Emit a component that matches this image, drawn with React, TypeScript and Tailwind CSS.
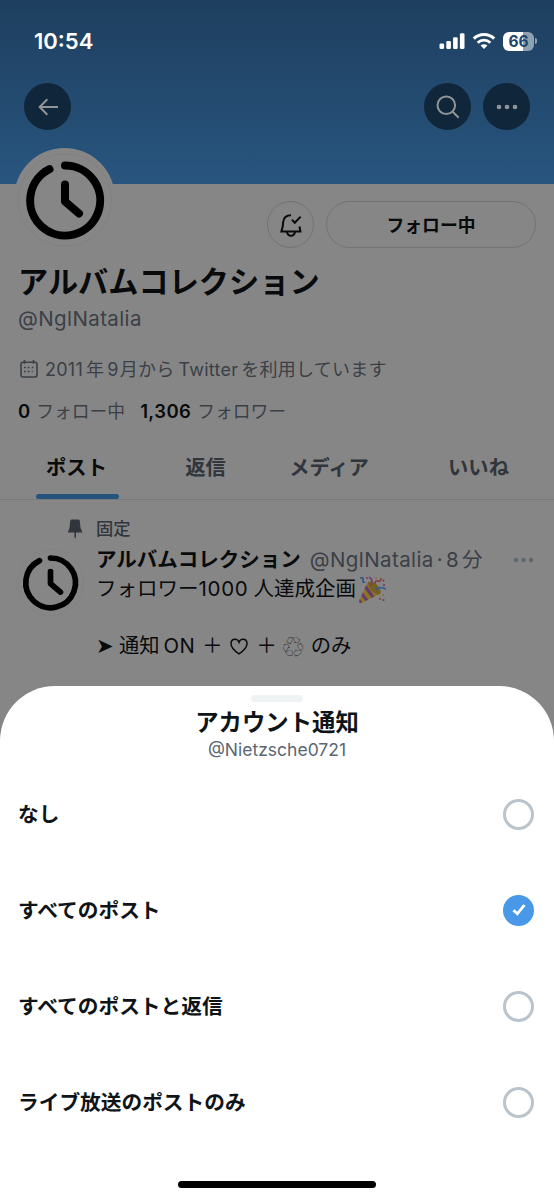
import clsx from "clsx";

const tabs = [
  { label: "ポスト", width: "w-[153px]", active: true },
  { label: "返信", width: "w-[105px]", active: false },
  { label: "メディア", width: "w-[142px]", active: false },
  { label: "いいね", width: "w-[157px]", active: false },
];

const options = [
  { label: "なし", selected: false },
  { label: "すべてのポスト", selected: true },
  { label: "すべてのポストと返信", selected: false },
  { label: "ライブ放送のポストのみ", selected: false },
];

function ClockLogo({ className }: { className: string }) {
  return (
    <svg viewBox="0 0 100 100" fill="none" className={className}>
      <circle cx="50" cy="50" r="46.5" stroke="#7f7f7f" strokeWidth="0.8" />
      <g stroke="#000" strokeWidth="8" strokeLinecap="round" strokeLinejoin="round">
        <path d="M50 15.5 A35 35 0 1 1 34.5 19.2" />
        <path d="M50 34.5 V51.5 L64 63.5" />
      </g>
    </svg>
  );
}

function Dots({ className }: { className: string }) {
  return (
    <svg viewBox="0 0 22 6" fill="currentColor" className={className}>
      <circle cx="3" cy="3" r="2.3" />
      <circle cx="11" cy="3" r="2.3" />
      <circle cx="19" cy="3" r="2.3" />
    </svg>
  );
}

function StatusBar() {
  return (
    <div className="flex h-[83px] items-start justify-between pt-[26px] pr-[17px] pl-[34px] text-white">
      <span className="text-[22px] leading-[30px] font-semibold">10:54</span>
      <div className="flex h-[30px] items-center">
        <svg viewBox="0 0 26 16" fill="currentColor" className="mr-[7px] h-4 w-[26px]">
          <rect x="0.5" y="10.5" width="4.6" height="5.5" rx="1.3" />
          <rect x="7.3" y="8" width="4.6" height="8" rx="1.3" />
          <rect x="14.1" y="4.2" width="4.6" height="11.8" rx="1.3" />
          <rect x="20.9" y="0.2" width="4.6" height="15.8" rx="1.3" />
        </svg>
        <svg viewBox="0 0 24 18" fill="none" stroke="currentColor" className="mr-[7px] h-[18px] w-6">
          <path d="M1.8 6.7 A14.6 14.6 0 0 1 22.2 6.7" strokeWidth="3.1" />
          <path d="M5.7 10.7 A9 9 0 0 1 18.3 10.7" strokeWidth="2.9" />
          <path d="M12 17 L8.6 13.6 A4.9 4.9 0 0 1 15.4 13.6 Z" fill="currentColor" stroke="none" />
        </svg>
        <div className="flex h-[19px] w-[31px] items-center justify-center rounded-[6px] bg-linear-to-r from-white from-66% to-[#8fa0b0] to-66% text-[15.5px] font-bold text-[#20456a]">
          <span className="pt-px font-['Inter'] leading-[18px]">66</span>
        </div>
        <div className="ml-[1px] h-[6px] w-[2px] rounded-r-full bg-[#8fa0b0]" />
      </div>
    </div>
  );
}

function PartyPopper() {
  return (
    <svg viewBox="0 0 28 28" fill="none" className="ml-[2px] h-7 w-7">
      <path d="M10 6 L22 18 L3 27 Q0.5 27.5 1 25 Z" fill="#8d7422" />
      <path d="M10 6 Q15 4 20 10 Q24 15 22 18 Q17 19 13 14 Q9 9 10 6 Z" fill="#756022" />
      <path d="M8.3 9 L16.5 20.6 L13.7 22 L6.6 12.5 Z M4.7 16.6 L10.2 23.7 L7.5 25 L3.4 19.7 Z" fill="#633c70" />
      <path d="M1.8 23 L4.4 26.3 L2.5 27.2 Q0.8 27 1.2 25 Z" fill="#633c70" />
      <path d="M2 2 Q6 1 5 4 Q4 7 7 6" stroke="#2d5687" strokeWidth="1.6" />
      <path d="M18 14 Q20 10 28 13" stroke="#365f91" strokeWidth="1.8" />
      <path d="M11 1 Q16 4 13 9" stroke="#764175" strokeWidth="1.6" />
      <path d="M17 8 Q17 4 20 5 Q23 6 23 2" stroke="#8b3742" strokeWidth="1.5" />
      <g fill="#8b3742">
        <circle cx="9" cy="2" r="1" />
        <circle cx="25.5" cy="4.5" r="1.1" />
        <circle cx="22" cy="23" r="1" />
      </g>
      <g fill="#633c70">
        <circle cx="26" cy="9" r="1.1" />
        <circle cx="25.5" cy="24" r="1" />
      </g>
      <circle cx="25" cy="19" r="1" fill="#8d7422" />
      <circle cx="18" cy="2" r="1" fill="#8d7422" />
    </svg>
  );
}

function Header() {
  return (
    <header className="h-[184px] bg-linear-to-b from-[#1e3f5f] to-[#28557f]">
      <StatusBar />
      <div className="flex items-center pr-6 pl-6 text-[#929496]">
        <button className="flex h-[47px] w-[47px] items-center justify-center rounded-full bg-[#10263a]">
          <svg viewBox="0 0 20 18" fill="none" stroke="currentColor" strokeWidth="2" className="h-[18px] w-5">
            <path d="M20 9 H2 M9.3 1.3 L1.7 9 L9.3 16.7" />
          </svg>
        </button>
        <button className="mr-3 ml-auto flex h-[47px] w-[47px] items-center justify-center rounded-full bg-[#10263a]">
          <svg viewBox="0 0 24 24" fill="none" stroke="currentColor" strokeWidth="2" className="h-6 w-6">
            <circle cx="10.3" cy="10.3" r="8.8" />
            <path d="M16.5 16.5 L22.7 22.7" />
          </svg>
        </button>
        <button className="flex h-[47px] w-[47px] items-center justify-center rounded-full bg-[#10263a]">
          <Dots className="h-[6px] w-[22px]" />
        </button>
      </div>
    </header>
  );
}

function Profile() {
  return (
    <section className="relative pt-[17px]">
      <div className="absolute -top-9 left-[14px] h-[101px] w-[101px] rounded-full bg-[#868686]">
        <ClockLogo className="mt-[2px] ml-[1px] h-[100px] w-[100px]" />
      </div>
      <div className="flex justify-end gap-3 pr-[18px]">
        <button className="flex h-[47px] w-[47px] items-center justify-center rounded-full border border-[#6f7376]">
          <svg viewBox="0 0 22 24" fill="none" stroke="#080a0c" strokeWidth="2" className="h-6 w-[22px]">
            <path d="M11 2.2 C6.5 2.2 3.6 4.8 3.2 8.8 L2.8 13 L1.4 18.4 H20.4 L19.5 13.5" />
            <path d="M7 18.8 C7.4 21.4 8.9 22.7 11 22.7 C13.1 22.7 14.6 21.4 15 18.8" />
            <path d="M12 6.8 L14.8 9.7 L20.6 3.6" />
          </svg>
        </button>
        <button className="h-[47px] w-[210px] rounded-full border border-[#6f7376] pt-[3px] text-[17.8px] font-bold text-[#080a0c]">
          フォロー中
        </button>
      </div>
      <div className="pl-[18px] whitespace-nowrap">
        <h1 className="mt-[14px] text-[30.2px] leading-10 font-bold text-[#080a0c]">アルバムコレクション</h1>
        <p className="text-[20.5px] leading-[34px] tracking-[0.4px] text-[#3a4046]">@NglNatalia</p>
        <div className="mt-4 flex h-[34px] items-center text-[18px] tracking-[0.25px] text-[#3a4046]">
          <svg viewBox="0 0 18 18" fill="none" stroke="currentColor" className="mr-[7px] ml-[2px] h-[18px] w-[18px]">
            <rect x="1" y="2.2" width="16" height="14.8" rx="2" strokeWidth="1.6" />
            <path d="M4.5 0 V3.8 M13.5 0 V3.8" strokeWidth="1.6" />
            <path d="M7.7 7.5 H9.5 M11.7 7.5 H13.5 M4 11.5 H5.8 M7.7 11.5 H9.5 M4 7.5 H5.8 M11.7 11.5 H12.8" strokeWidth="1.7" />
          </svg>
          <span className="flex">
            2011<span className="mr-[3px] ml-[3px]">年</span>9<span className="mr-1 ml-px">月から</span>
            Twitter<span className="ml-[3px]">を利用しています</span>
          </span>
        </div>
        <div className="mt-[9px] flex h-[34px] items-center text-[17.8px] text-[#3a4046]">
          <b className="mr-[6px] text-[18.5px] font-semibold text-[#080a0c]">0</b>フォロー中
          <b className="mr-[6px] ml-[15px] text-[18.5px] font-semibold tracking-[0.4px] text-[#080a0c]">1,306</b>フォロワー
        </div>
      </div>
      <nav className="mt-6 flex h-[47px] border-b border-[#777a7c]">
        {tabs.map((tab) => (
          <div key={tab.label} className={clsx("flex shrink-0 flex-col items-center justify-between", tab.width)}>
            <span
              className={clsx("text-[20.3px] leading-[30px] font-bold", tab.active ? "text-[#080a0c]" : "text-[#30363c]")}
            >
              {tab.label}
            </span>
            {tab.active && <span className="ml-[2px] h-[5px] w-[83px] rounded-full bg-[#27547f]" />}
          </div>
        ))}
      </nav>
    </section>
  );
}

function PinnedPost() {
  return (
    <article className="pt-[15px] whitespace-nowrap text-[#080a0c]">
      <div className="flex h-7 items-center pl-[67px] text-[17.3px] font-medium text-[#30363c]">
        <svg viewBox="0 0 16 20" fill="currentColor" className="mr-[13px] h-5 w-4">
          <path d="M4.5 0.5 H11.5 Q12.7 0.5 12.8 2 L13.5 9 L15.5 13.5 H9 V17.5 L8.2 20 L7.4 17.5 V13.5 H0.8 L2.5 9 L3.2 2 Q3.3 0.5 4.5 0.5 Z" />
        </svg>
        固定
      </div>
      <div className="flex">
        <ClockLogo className="mt-[4px] mr-[10px] ml-[15px] h-[71px] w-[71px] shrink-0" />
        <div className="flex-1 pt-[2px]">
          <div className="flex h-[30px] items-center pr-5">
            <span className="text-[20.5px] font-bold">アルバムコレクション</span>
            <span className="ml-[9px] flex text-[20.5px] tracking-[0.4px] text-[#3a4046]">
              @NglNatalia<span className="mx-[3px]">·</span>8<span className="ml-[3px]">分</span>
            </span>
            <Dots className="ml-auto h-[6px] w-[21px] text-[#5c6870]" />
          </div>
          <p className="flex h-[29px] items-center text-[20.5px]">
            フォロワー<span className="tracking-[0.7px]">1000</span>
            <span className="ml-[5px]">人達成企画</span>
            <PartyPopper />
          </p>
          <p className="mt-[27px] flex h-[30px] items-center text-[20.3px]">
            <span className="w-[23px] text-[21px]">➤</span>
            通知<span className="mr-[7px] ml-[4px] tracking-[0.4px]">ON</span>＋
            <svg viewBox="0 0 18 17" fill="none" stroke="currentColor" strokeWidth="1.5" className="mx-[8px] h-[17px] w-[18px]">
              <path d="M9 15.8 C4 12.5 1 9.3 1 5.7 C1 3 2.8 1.2 5 1.2 C7 1.2 8.4 2.4 9 4.2 C9.6 2.4 11 1.2 13 1.2 C15.2 1.2 17 3 17 5.7 C17 9.3 14 12.5 9 15.8 Z" />
            </svg>
            ＋<span className="mr-[7px] ml-[6px] w-[21px] text-[21px] leading-none text-[#292929]">♲</span>のみ
          </p>
        </div>
      </div>
    </article>
  );
}

function NotificationSheet() {
  return (
    <div className="absolute inset-x-0 bottom-0 flex h-[514px] flex-col items-center rounded-t-[55px] bg-white text-[#0f1419]">
      <div className="mt-[9px] h-[7px] w-[52px] rounded-full bg-[#eff3f4]" />
      <h2 className="mt-[6px] text-[23.4px] leading-[30px] font-bold">アカウント通知</h2>
      <p className="text-[17.5px] leading-6 text-[#5b6772]">@Nietzsche0721</p>
      <ul className="mt-1 w-full">
        {options.map((option) => (
          <li key={option.label} className="flex h-24 items-center justify-between pr-5 pl-[18px]">
            <span className="pt-[2px] text-[20.7px] font-bold">{option.label}</span>
            {option.selected ? (
              <span className="flex h-[31px] w-[31px] items-center justify-center rounded-full bg-[#4a99e9] text-white">
                <svg viewBox="0 0 14 14" fill="none" stroke="currentColor" strokeWidth="2.8" className="h-[14px] w-[14px]">
                  <path d="M1.4 7.2 L5.4 10.8 L12.4 2" />
                </svg>
              </span>
            ) : (
              <span className="h-[31px] w-[31px] rounded-full border-3 border-[#b9c4cc]" />
            )}
          </li>
        ))}
      </ul>
      <div className="mt-auto mb-3 h-[7px] w-[198px] rounded-full bg-black" />
    </div>
  );
}

export default function App() {
  return (
    <main
      lang="ja"
      className="relative h-[1200px] w-[554px] overflow-hidden bg-[#868686] font-['Inter','Noto_Sans_CJK_JP',sans-serif]"
    >
      <Header />
      <Profile />
      <PinnedPost />
      <NotificationSheet />
    </main>
  );
}
